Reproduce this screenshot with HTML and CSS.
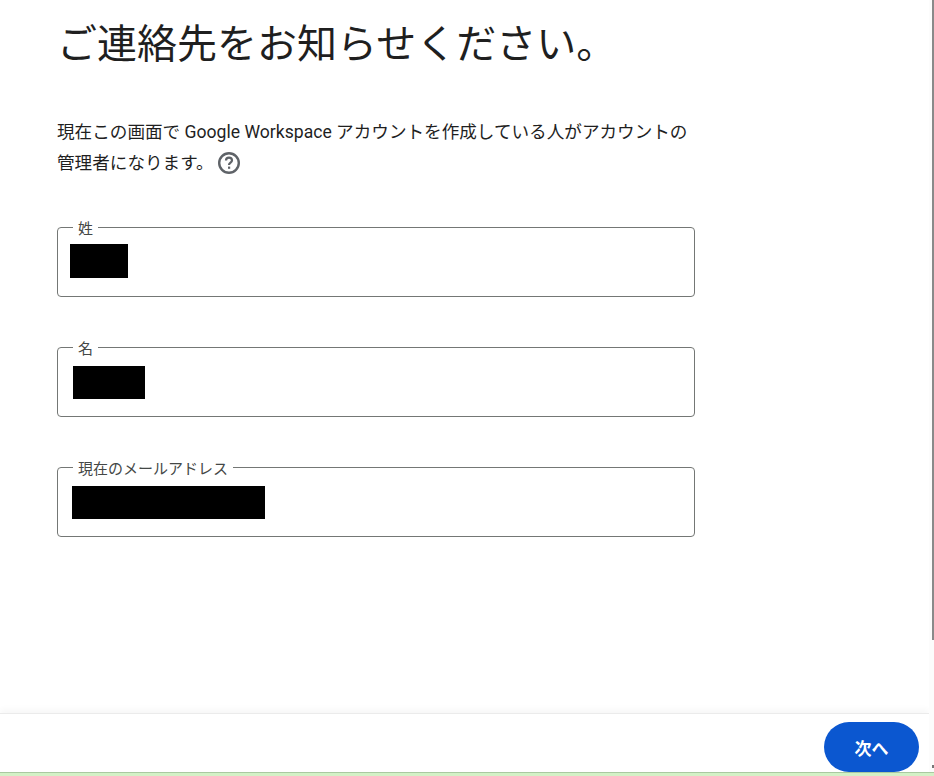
FILE: index.html
```html
<!DOCTYPE html>
<html lang="ja">

<head>
	<meta charset="UTF-8">
	<meta name="viewport" content="width=device-width, initial-scale=1.0">
	<title>ご連絡先をお知らせください。</title>
	<link rel="stylesheet" href="styles.css">
</head>

<body>
	<div class="page">
		<main class="content">
			<h1>ご連絡先をお知らせください。</h1>
			<p class="intro">現在この画面で Google Workspace アカウントを作成している人がアカウントの<br>管理者になります。
				<svg class="help" viewBox="0 0 24 24" width="24" height="24" aria-hidden="true">
					<circle cx="12" cy="12" r="9.8" fill="none" stroke="#5f6368" stroke-width="2.4"/>
					<path d="M9 9.6a3 3 0 0 1 6 0c0 2-3 2.2-3 4.4" fill="none" stroke="#5f6368" stroke-width="2.2"/>
					<rect x="11" y="15.6" width="2.2" height="2.2" fill="#5f6368"/>
				</svg>
			</p>

			<fieldset class="field">
				<legend>姓</legend>
				<div class="redacted redacted-last"></div>
			</fieldset>

			<fieldset class="field">
				<legend>名</legend>
				<div class="redacted redacted-first"></div>
			</fieldset>

			<fieldset class="field">
				<legend>現在のメールアドレス</legend>
				<div class="redacted redacted-email"></div>
			</fieldset>
		</main>

		<footer class="footer">
			<button class="next">次へ</button>
		</footer>
	</div>
	<div class="strip"></div>

	<!-- 右端のスクロールバー -->
	<div class="scrollbar">
		<div class="thumb"></div>
		<div class="arrow"></div>
	</div>
</body>

</html>
```

FILE: styles.css
```css
html {
	background-color: #fff;
}

body {
	position: relative;
	margin: 0;
	height: 776px;
	overflow: hidden;
	display: flex;
	flex-direction: column;
	font-family: Roboto, "Noto Sans CJK JP", sans-serif;
	color: #1f1f1f;
}

.page {
	flex: 1;
	display: flex;
	flex-direction: column;
}

.content {
	flex: 1;
	padding: 0 0 0 57px;
}

h1 {
	margin: 0;
	padding: 19px 0 0 0;
	font-size: 40px;
	font-weight: 400;
	line-height: 52px;
}

.intro {
	width: 660px;
	margin: 46px 0 0;
	font-size: 17.6px;
	line-height: 31px;
}

.help {
	vertical-align: -6px;
	margin-left: -1px;
}

.field {
	box-sizing: border-box;
	width: 638px;
	height: 80px;
	margin: 0 0 40px;
	padding: 0;
	border: 1px solid #747775;
	border-radius: 4px;
}

.field:first-of-type {
	margin-top: 38px;
}

.field legend {
	margin-left: 15px;
	padding: 4px 5px 0;
	font-size: 15px;
	line-height: 16px;
	color: #444746;
}

.redacted {
	background-color: #000;
}

.redacted-last {
	width: 58px;
	height: 34px;
	margin: 7px 0 0 12px;
}

.redacted-first {
	width: 72px;
	height: 33px;
	margin: 9px 0 0 15px;
}

.redacted-email {
	width: 193px;
	height: 33px;
	margin: 9px 0 0 14px;
}

.footer {
	display: flex;
	justify-content: flex-end;
	align-items: flex-start;
	height: 59px;
	padding: 8px 15px 0 0;
	margin-right: 5px;
	box-sizing: border-box;
	border-top: 1px solid #ebebeb;
	box-shadow: 0 -4px 6px rgba(0, 0, 0, 0.03);
}

.next {
	width: 95px;
	height: 50px;
	padding: 0;
	margin-right: -5px;
	border: none;
	border-radius: 25px;
	background-color: #0b57d0;
	color: #fff;
	font-family: inherit;
	font-size: 17px;
	font-weight: 700;
}

.strip {
	height: 4px;
	background-color: #d3f1c6;
	border-top: 1px solid #a9c9a0;
	box-sizing: border-box;
}

.scrollbar {
	position: absolute;
	top: 0;
	right: 0;
	bottom: 4px;
	width: 5px;
	background-color: #fcfcfc;
}

.thumb {
	position: absolute;
	top: 0;
	right: 0;
	width: 2px;
	height: 640px;
	background-color: #8a8a8a;
}

.arrow {
	position: absolute;
	right: 0;
	bottom: 4px;
	width: 2px;
	height: 3px;
	background-color: #777;
}
```
